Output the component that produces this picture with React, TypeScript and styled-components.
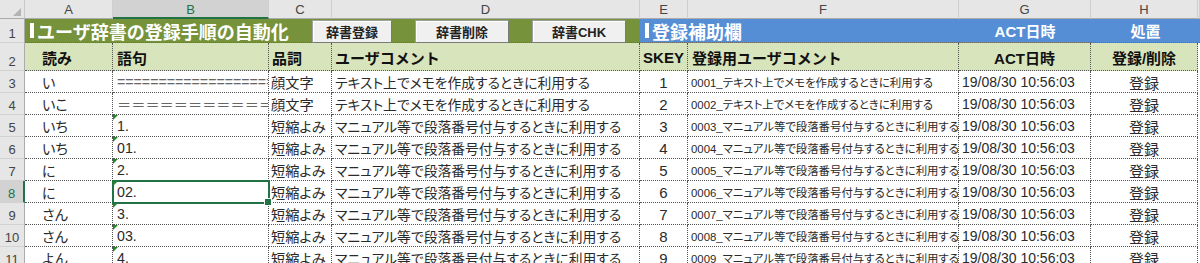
import React from "react";
import styled, { createGlobalStyle } from "styled-components";

const GlobalStyle = createGlobalStyle`
  html, body { margin: 0; padding: 0; background: #fff; overflow: hidden; }
  body { font-family: "Liberation Sans", "Noto Sans CJK JP", sans-serif; }
  * { box-sizing: border-box; }
`;

const GREEN = "#76933c";
const BLUE = "#558ed5";
const LIGHT = "#d8e4bc";
const SEL = "#217346";

const Sheet = styled.div`
  display: grid;
  grid-template-columns: 25px 88px 156px 63px 308px 48px 271px 132px 107px 2px;
  grid-template-rows: 19px 24px 28px repeat(9, 22px);
  width: 1200px;
  height: 263px;
  overflow: hidden;
`;

const Corner = styled.div`
  background: #e6e6e6;
  border-right: 1px solid #c8c8c8;
  border-bottom: 1px solid #ababab;
  display: flex;
  align-items: flex-end;
  justify-content: flex-end;
  padding: 0 3px 2px 0;
`;

const ColHead = styled.div<{ $sel?: boolean }>`
  display: flex;
  align-items: center;
  justify-content: center;
  background: ${(p) => (p.$sel ? "#d2d2d2" : "#e6e6e6")};
  color: ${(p) => (p.$sel ? SEL : "#444")};
  font: 13px "Liberation Sans", sans-serif;
  border-right: 1px solid #cfcfcf;
  border-bottom: ${(p) => (p.$sel ? `2px solid ${SEL}` : "1px solid #ababab")};
  padding-top: ${(p) => (p.$sel ? "2px" : "1px")};
`;

const RowHead = styled.div<{ $sel?: boolean }>`
  display: flex;
  align-items: flex-end;
  justify-content: center;
  padding-bottom: 1px;
  background: ${(p) => (p.$sel ? "#d2d2d2" : "#e6e6e6")};
  color: ${(p) => (p.$sel ? SEL : "#444")};
  font: 13px "Liberation Sans", sans-serif;
  border-bottom: 1px solid #d2d2d2;
  border-right: ${(p) => (p.$sel ? `2px solid ${SEL}` : "1px solid #ababab")};
`;

const Banner = styled.div<{ $span: string; $bg: string; $center?: boolean }>`
  grid-column: ${(p) => p.$span};
  background: ${(p) => p.$bg};
  display: flex;
  align-items: stretch;
  justify-content: ${(p) => (p.$center ? "center" : "flex-start")};
  padding-left: ${(p) => (p.$center ? "0" : "5px")};
  border-bottom: 1px dotted #6a6a6a;
  color: #fff;
`;

const BannerTitle = styled.div`
  align-self: center;
  display: flex;
  align-items: center;
  gap: 3px;
  font: bold 18px "Noto Sans CJK JP", sans-serif;
  line-height: 1;
  color: #fff;
  &::before {
    content: "";
    width: 4px;
    height: 15px;
    background: #fff;
  }
`;

const BannerLabel = styled.div`
  align-self: center;
  font: bold 15px "Liberation Sans", "Noto Sans CJK JP", sans-serif;
  line-height: 1;
  padding-top: 1px;
`;

const Toolbar = styled.div`
  margin-left: auto;
  margin-right: 14px;
  display: flex;
  gap: 23px;
  padding-top: 1px;
`;

const SheetButton = styled.button<{ $w: number }>`
  width: ${(p) => p.$w}px;
  height: 23px;
  margin: 0;
  padding: 0;
  background: #f0f0f0;
  border: 1px solid #a0a0a0;
  border-right-color: #7a7a7a;
  border-bottom-color: #7a7a7a;
  box-shadow: inset 1px 1px 0 #fff;
  font: bold 13px "Liberation Sans", "Noto Sans CJK JP", sans-serif;
  color: #222;
  display: flex;
  align-items: center;
  justify-content: center;
`;

const HeadCell = styled.div<{ $align?: "left" | "center"; $pad?: number }>`
  background: ${LIGHT};
  display: flex;
  align-items: center;
  justify-content: ${(p) => (p.$align === "center" ? "center" : "flex-start")};
  padding-left: ${(p) => p.$pad ?? 0}px;
  padding-top: 2px;
  font: bold 15px "Liberation Sans", "Noto Sans CJK JP", sans-serif;
  color: #111;
  border-right: 1px dotted #555;
  border-bottom: 1px dotted #555;
  white-space: nowrap;
  overflow: hidden;
`;

const Cell = styled.div<{
  $align?: "left" | "center";
  $pad?: number;
  $size?: number;
  $flag?: boolean;
  $sel?: boolean;
  $muted?: boolean;
}>`
  position: relative;
  display: flex;
  align-items: center;
  justify-content: ${(p) => (p.$align === "center" ? "center" : "flex-start")};
  padding-left: ${(p) => p.$pad ?? 0}px;
  padding-top: 1px;
  font-family: "Liberation Sans", "Noto Sans CJK JP", sans-serif;
  font-size: ${(p) => p.$size ?? 13.8}px;
  font-feature-settings: "palt";
  color: ${(p) => (p.$muted ? "#666" : "#2a2a2a")};
  background: #fff;
  border-right: 1px dotted #555;
  border-bottom: 1px dotted #555;
  white-space: nowrap;
  overflow: ${(p) => (p.$sel ? "visible" : "hidden")};
  z-index: ${(p) => (p.$sel ? 2 : "auto")};
  outline: ${(p) => (p.$sel ? `2px solid ${SEL}` : "none")};
  outline-offset: -1px;
  &::before {
    content: "";
    display: ${(p) => (p.$flag ? "block" : "none")};
    position: absolute;
    top: 0;
    left: 0;
    border-top: 5px solid #1f8a1f;
    border-right: 5px solid transparent;
  }
  &::after {
    content: "";
    display: ${(p) => (p.$sel ? "block" : "none")};
    position: absolute;
    right: -4px;
    bottom: -4px;
    width: 6px;
    height: 6px;
    background: ${SEL};
    border: 1px solid #fff;
  }
`;

const CellText = styled.span`
  overflow: hidden;
`;

const Filler = styled.div`
  background: #fff;
`;

const D1 = "テキスト上でメモを作成するときに利用する";
const D2 = "マニュアル等で段落番号付与するときに利用する";

type Row = { n: number; a: string; b: string; c: string; d: string; e: number; flag?: boolean; sel?: boolean; muted?: boolean };

const rows: Row[] = [
  { n: 3, a: "い", b: "=".repeat(30), c: "顔文字", d: D1, e: 1, muted: true },
  { n: 4, a: "いこ", b: "＝".repeat(20), c: "顔文字", d: D1, e: 2, muted: true },
  { n: 5, a: "いち", b: "1.", c: "短縮よみ", d: D2, e: 3, flag: true },
  { n: 6, a: "いち", b: "01.", c: "短縮よみ", d: D2, e: 4, flag: true },
  { n: 7, a: "に", b: "2.", c: "短縮よみ", d: D2, e: 5, flag: true },
  { n: 8, a: "に", b: "02.", c: "短縮よみ", d: D2, e: 6, flag: true, sel: true },
  { n: 9, a: "さん", b: "3.", c: "短縮よみ", d: D2, e: 7, flag: true },
  { n: 10, a: "さん", b: "03.", c: "短縮よみ", d: D2, e: 8, flag: true },
  { n: 11, a: "よん", b: "4.", c: "短縮よみ", d: D2, e: 9, flag: true },
];

const letters = ["A", "B", "C", "D", "E", "F", "G", "H", ""];

export default function App() {
  return (
    <>
      <GlobalStyle />
      <Sheet>
        <Corner>
          <svg width="8" height="8" viewBox="0 0 8 8">
            <polygon points="8,0 8,8 0,8" fill="#b4b4b4" />
          </svg>
        </Corner>
        {letters.map((l, i) => (
          <ColHead key={i} $sel={l === "B"}>
            {l}
          </ColHead>
        ))}

        <RowHead>1</RowHead>
        <Banner $span="2 / 6" $bg={GREEN}>
          <BannerTitle>ユーザ辞書の登録手順の自動化</BannerTitle>
          <Toolbar>
            <SheetButton $w={80}>辞書登録</SheetButton>
            <SheetButton $w={94}>辞書削除</SheetButton>
            <SheetButton $w={94}>辞書CHK</SheetButton>
          </Toolbar>
        </Banner>
        <Banner $span="6 / 8" $bg={BLUE}>
          <BannerTitle>登録補助欄</BannerTitle>
        </Banner>
        <Banner $span="8 / 9" $bg={BLUE} $center>
          <BannerLabel>ACT日時</BannerLabel>
        </Banner>
        <Banner $span="9 / 11" $bg={BLUE} $center>
          <BannerLabel>処置</BannerLabel>
        </Banner>

        <RowHead>2</RowHead>
        <HeadCell $pad={17}>読み</HeadCell>
        <HeadCell $pad={4}>語句</HeadCell>
        <HeadCell $pad={3}>品詞</HeadCell>
        <HeadCell $pad={3}>ユーザコメント</HeadCell>
        <HeadCell $align="center">SKEY</HeadCell>
        <HeadCell $pad={4}>登録用ユーザコメント</HeadCell>
        <HeadCell $align="center">ACT日時</HeadCell>
        <HeadCell $align="center">登録/削除</HeadCell>
        <Filler />

        {rows.map((r) => (
          <React.Fragment key={r.n}>
            <RowHead $sel={r.sel}>{r.n}</RowHead>
            <Cell $pad={17} $size={14.2}>{r.a}</Cell>
            <Cell $pad={4} $size={14.2} $flag={r.flag} $sel={r.sel} $muted={r.muted}>
              <CellText>{r.b}</CellText>
            </Cell>
            <Cell $pad={2} $size={14.2}>{r.c}</Cell>
            <Cell $pad={3}>{r.d}</Cell>
            <Cell $align="center" $size={15}>{r.e}</Cell>
            <Cell $pad={3} $size={11.4}>{`${String(r.e).padStart(4, "0")}_${r.d}`}</Cell>
            <Cell $pad={3} $size={14}>19/08/30 10:56:03</Cell>
            <Cell $align="center" $size={15}>登録</Cell>
            <Filler />
          </React.Fragment>
        ))}
      </Sheet>
    </>
  );
}
